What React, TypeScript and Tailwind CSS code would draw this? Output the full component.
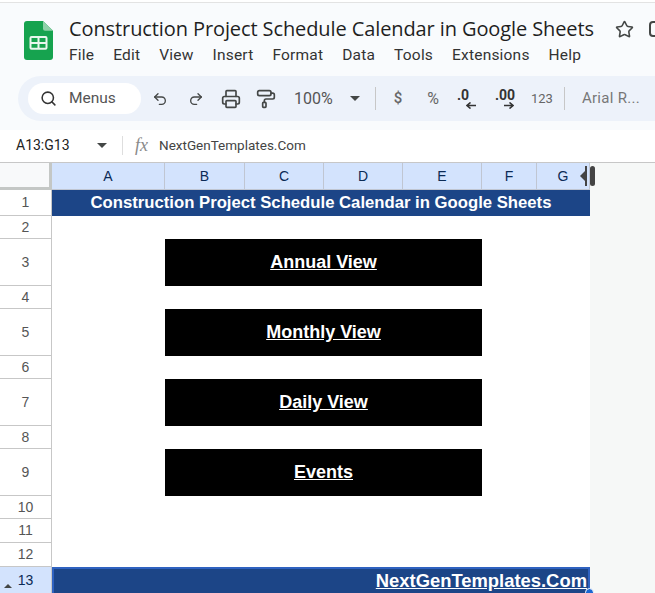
import React from "react";
import { Search, Undo2, Redo2, Printer, PaintRoller, Star } from "lucide-react";

const MENU = ["File", "Edit", "View", "Insert", "Format", "Data", "Tools", "Extensions", "Help"];

const COLUMNS = ["A", "B", "C", "D", "E", "F", "G"];

// row header heights, top to bottom
const ROWS = [
  { n: 1, row: "row-start-2" },
  { n: 2, row: "row-start-3" },
  { n: 3, row: "row-start-4" },
  { n: 4, row: "row-start-5" },
  { n: 5, row: "row-start-6" },
  { n: 6, row: "row-start-7" },
  { n: 7, row: "row-start-8" },
  { n: 8, row: "row-start-9" },
  { n: 9, row: "row-start-10" },
  { n: 10, row: "row-start-11" },
  { n: 11, row: "row-start-12" },
  { n: 12, row: "row-start-13" },
];

const LINKS = [
  { label: "Annual View", row: "row-start-4" },
  { label: "Monthly View", row: "row-start-6" },
  { label: "Daily View", row: "row-start-8" },
  { label: "Events", row: "row-start-10" },
];

function SheetsLogo() {
  return (
    <svg width="29" height="39" viewBox="0 0 29 40" preserveAspectRatio="none" className="mt-[3px] shrink-0">
      <path d="M3 0H19L29 10V37a3 3 0 0 1-3 3H3a3 3 0 0 1-3-3V3a3 3 0 0 1 3-3z" fill="#16a34f" />
      <path d="M19 0L29 10H21a2 2 0 0 1-2-2z" fill="#8ed1a8" />
      <rect x="6.5" y="16.5" width="16" height="12" rx="1" fill="none" stroke="#e8f6ee" strokeWidth="2" />
      <path d="M6.5 22.5H22.5M14.5 16.5V28.5" stroke="#e8f6ee" strokeWidth="2" />
    </svg>
  );
}

function Divider() {
  return <div className="h-[23px] w-px bg-[#c7c7c7]" />;
}

function Caret({ className }: { className: string }) {
  return <div className={`h-0 w-0 border-x-[5px] border-t-[5px] border-x-transparent border-t-[#444746] ${className}`} />;
}

// small arrow under the decimal buttons
function DecimalArrow({ left, className }: { left?: boolean; className: string }) {
  return (
    <svg width="10" height="7" viewBox="0 0 10 7" className={className}>
      <path d={left ? "M10 3.5H2M4.5 .5L1 3.5L4.5 6.5" : "M0 3.5H8M5.5 .5L9 3.5L5.5 6.5"} fill="none" stroke="#333" strokeWidth="1.6" />
    </svg>
  );
}

export default function App() {
  return (
    <div className="h-[593px] w-[655px] overflow-hidden bg-[#f9fbfd] font-['Roboto',sans-serif] text-[#1f1f1f]">
      <div className="h-[3px] border-b border-[#e3e3e3] bg-white" />

      {/* Title + menu */}
      <div className="flex h-[73px] pl-6 pt-[15px]">
        <SheetsLogo />
        <div className="ml-4 min-w-0">
          <div className="mt-px flex items-center whitespace-nowrap">
            <span className="font-['Open_Sans',sans-serif] text-[20px] leading-[20px] tracking-[-0.1px]">
              Construction Project Schedule Calendar in Google Sheets
            </span>
            <Star className="ml-[21px] size-[19px] shrink-0 text-[#444746]" strokeWidth={2} />
            <div className="ml-[15px] h-4 w-5 shrink-0 rounded-sm border-2 border-[#444746]" />
          </div>
          <div className="mt-[7px] flex gap-[19px] text-[15.5px] leading-[18px] text-[#333]">
            {MENU.map((m) => (
              <span key={m} className="tracking-[0.2px]">{m}</span>
            ))}
          </div>
        </div>
      </div>

      {/* Toolbar */}
      <div className="ml-[18px] flex h-[45px] items-center whitespace-nowrap rounded-l-[23px] bg-[#edf2fa] pl-[10px] text-[#444746]">
        <div className="flex h-[31px] w-[113px] items-center rounded-full bg-white pl-3 text-[15.5px]">
          <Search className="size-[17px] text-[#333]" strokeWidth={2.2} />
          <span className="ml-[12px] text-[#555]">Menus</span>
        </div>
        <Undo2 className="ml-[11px] size-[16px]" strokeWidth={2} />
        <Redo2 className="ml-[20px] size-[16px]" strokeWidth={2} />
        <Printer className="ml-[17px] size-[20px]" strokeWidth={2} />
        <PaintRoller className="ml-[15px] size-[20px]" strokeWidth={2} />
        <span className="ml-[18px] text-[16px] text-[#555]">100%</span>
        <Caret className="ml-[17px]" />
        <div className="ml-[15px]"><Divider /></div>
        <span className="ml-[18px] text-[15px] font-medium text-[#666]">$</span>
        <span className="ml-[25px] text-[16px] text-[#666]">%</span>
        <div className="ml-[18px] flex w-[20px] flex-col items-start text-[#333]">
          <span className="text-[14px] font-bold leading-[14px]">.0</span>
          <DecimalArrow left className="ml-[9px]" />
        </div>
        <div className="ml-[18px] flex w-[22px] flex-col items-start text-[#333]">
          <span className="text-[14px] font-bold leading-[14px]">.00</span>
          <DecimalArrow className="ml-[9px]" />
        </div>
        <span className="ml-[14px] text-[13px] text-[#666]">123</span>
        <div className="ml-[11px]"><Divider /></div>
        <span className="ml-[17px] text-[15px] tracking-[0.3px] text-[#777]">Arial R...</span>
      </div>

      {/* Formula bar */}
      <div className="mt-[9px] flex h-[33px] items-center border-b border-[#c7c7c7] bg-white pb-[2px] text-[14px]">
        <span className="ml-4 w-[76px] text-[#222]">A13:G13</span>
        <Caret className="ml-[5px]" />
        <div className="ml-[15px] h-[19px] w-px bg-[#dedede]" />
        <span className="ml-[12px] font-['Liberation_Serif',serif] text-[18px] italic text-[#8a8a8a]">fx</span>
        <span className="ml-[11px] text-[13.5px] text-[#444]">NextGenTemplates.Com</span>
      </div>

      {/* Grid */}
      <div className="flex h-[430px]">
        <div className="relative grid h-full w-[590px] shrink-0 grid-cols-[52px_113px_80px_79px_79px_79px_55px_53px] grid-rows-[27px_26px_23px_47px_23px_47px_23px_47px_23px_47px_23px_24px_24px_26px] bg-white font-['Liberation_Sans',sans-serif]">
          {/* Corner */}
          <div className="border-b-[3px] border-r-[3px] border-[#c4c7c5] bg-[#f8f9fa]" />

          {/* Column headers */}
          {COLUMNS.map((c) => (
            <div
              key={c}
              className="flex items-center justify-center border-b border-r border-[#c0c6d2] bg-[#d3e3fd] text-[14px] text-[#0b2a55]"
            >
              {c}
            </div>
          ))}

          {/* Row headers */}
          {ROWS.map((r) => (
            <div
              key={r.n}
              className={`${r.row} col-start-1 flex items-center justify-center border-b border-r border-[#c7c7c7] bg-white text-[14px] text-[#555]`}
            >
              {r.n}
            </div>
          ))}
          <div className="relative col-start-1 row-start-14 flex items-center justify-center border-r border-[#c7c7c7] bg-[#d3e3fd] text-[14px] text-[#0b2a55]">
            <div className="absolute bottom-[5px] left-[4px] h-0 w-0 border-x-[4px] border-b-[4px] border-x-transparent border-b-[#444746]" />
            13
          </div>

          {/* Title row */}
          <div className="col-start-2 col-end-9 row-start-2 flex items-center justify-center bg-[#1c4587] text-[16.7px] font-bold text-white">
            Construction Project Schedule Calendar in Google Sheets
          </div>

          {/* Navigation buttons */}
          {LINKS.map((l) => (
            <div
              key={l.label}
              className={`${l.row} col-start-3 col-end-7 flex items-center justify-center bg-black text-[18px] font-bold text-white underline`}
            >
              {l.label}
            </div>
          ))}

          {/* Footer row */}
          <div className="col-start-2 col-end-9 row-start-14 flex items-center justify-end border-x-2 border-t-2 border-[#2f62c0] bg-[#1c4587] pr-[1px] text-[18.4px] font-bold text-white underline">
            NextGenTemplates.Com
          </div>

          {/* Freeze handle + selection dot */}
          <div className="absolute left-[580px] top-[8px] h-0 w-0 border-y-[5px] border-r-[5px] border-y-transparent border-r-[#444]" />
          <div className="absolute left-[585px] top-[3px] h-[20px] w-[2px] bg-[#444]" />
          <div className="absolute left-[590px] top-[3px] h-[20px] w-[5px] rounded-sm bg-[#444]" />
          <div className="absolute bottom-[-4px] right-[-4px] size-[9px] rounded-full border border-white bg-[#1a66d2]" />
        </div>
        <div className="flex-1 bg-[#f6f8f7]" />
      </div>
    </div>
  );
}
